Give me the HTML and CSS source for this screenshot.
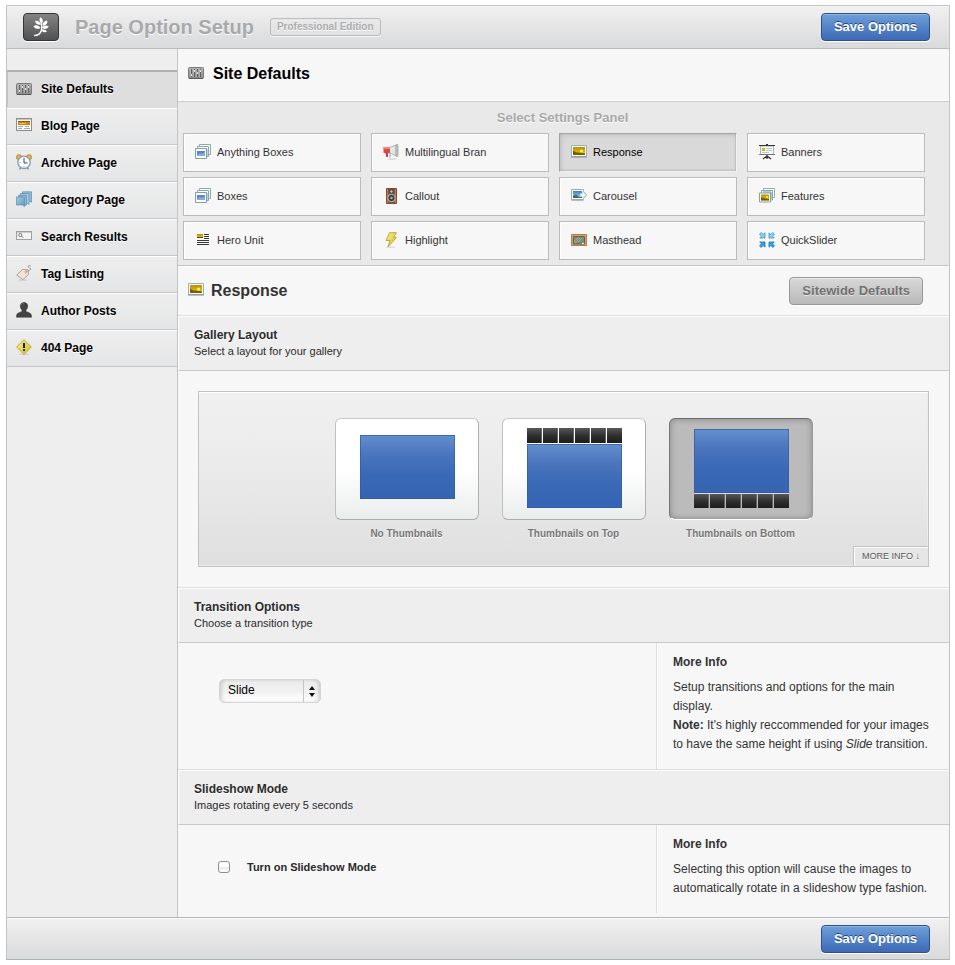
FILE: index.html
```html
<!DOCTYPE html>
<html lang="en">
<head>
<meta charset="utf-8">
<meta name="viewport" content="width=device-width, initial-scale=1">
<title>Page Option Setup</title>
<link rel="stylesheet" href="styles.css">
</head>
<body>
<svg class="sprite" width="0" height="0" aria-hidden="true">
  <defs>
    <linearGradient id="g-gold" x1="0" y1="0" x2="0" y2="1"><stop offset="0" stop-color="#b8900c"/><stop offset="1" stop-color="#e8c800"/></linearGradient>
    <linearGradient id="g-sky" x1="0" y1="0" x2="0" y2="1"><stop offset="0" stop-color="#3d78d0"/><stop offset="1" stop-color="#b4d4f2"/></linearGradient>
    <linearGradient id="g-metal" x1="0" y1="0" x2="0" y2="1"><stop offset="0" stop-color="#b4b4b4"/><stop offset="1" stop-color="#8c8c8c"/></linearGradient>
    <linearGradient id="g-screen" x1="0" y1="0" x2="0" y2="1"><stop offset="0" stop-color="#648fce"/><stop offset=".3" stop-color="#4b75bd"/><stop offset=".65" stop-color="#3868b6"/><stop offset="1" stop-color="#3565b2"/></linearGradient>
    <linearGradient id="g-thumb" x1="0" y1="0" x2="0" y2="1"><stop offset="0" stop-color="#58585a"/><stop offset=".5" stop-color="#303031"/><stop offset="1" stop-color="#1d1c1d"/></linearGradient>
    <linearGradient id="g-sheet" x1="0" y1="0" x2="1" y2="1"><stop offset="0" stop-color="#a5cde4"/><stop offset="1" stop-color="#6096ba"/></linearGradient>
    <linearGradient id="g-yellow" x1="0" y1="0" x2="1" y2="1"><stop offset="0" stop-color="#f4f09a"/><stop offset="1" stop-color="#d2bd17"/></linearGradient>
  </defs>
  <symbol id="i-mixer" viewBox="0 0 16 16">
    <rect x=".5" y="2.500" width="15" height="11" rx="1" fill="url(#g-metal)" stroke="#7c7c7c"/>
    <path d="M1 13.500h14" stroke="#555"/>
    <path d="M3.500 4v8M6.500 4v8M9.500 4v8M12.500 4v8" stroke="#606060"/>
    <path d="M3.500 9v2M6.500 5v2M9.500 7v2M12.500 5v2" stroke="#e2e2e2"/>
    <path d="M2.500 4v8M5.500 4v8M8.500 4v8M11.500 4v8" stroke="#c6c6c6" stroke-width=".4"/>
  </symbol>
  <symbol id="i-blog" viewBox="0 0 16 16">
    <rect x=".5" y="1.500" width="15" height="12" fill="#f6f6f6" stroke="#8e8e8e"/>
    <path d="M1 2.500h14" stroke="#c4c8cc"/>
    <rect x="2" y="4" width="12" height="4" fill="#c8860f"/><path d="M2 4.500h12" stroke="#9c5a05"/><path d="M3 6.500h7" stroke="#eac06a"/>
    <path d="M2 9.500h5M2 11.500h4M9 9.500h4M8 11.500h6" stroke="#aaa"/>
  </symbol>
  <symbol id="i-clock" viewBox="0 0 16 16">
    <circle cx="3" cy="3.200" r="2.600" fill="#e9b54c" stroke="#a97924" stroke-width=".7"/><circle cx="13" cy="3.200" r="2.600" fill="#e9b54c" stroke="#a97924" stroke-width=".7"/>
    <path d="M3.500 15.500l2-3M12.500 15.500l-2-3" stroke="#777" stroke-width="1.200"/>
    <circle cx="8" cy="8.300" r="6.200" fill="#fbfcfe" stroke="#7f9cb8" stroke-width="1.300"/>
    <path d="M8 4v5h3.500" fill="none" stroke="#444"/><path d="M8 12v1.500M3.500 8.500H5" stroke="#999" stroke-width=".7"/>
  </symbol>
  <symbol id="i-sheets" viewBox="0 0 16 16" stroke="#5d8dad" stroke-width=".7">
    <path d="M6.500.8h9v10.500l-1.500-1H6.500z" fill="#90bdd8"/><path d="M4.500 2.500h8.500v11l-1.500-1H4.500z" fill="#a5cce2"/>
    <path d="M2.500 4.300h8V14l-2 .5-1-1h-5z" fill="#8dbcd8"/><path d="M.5 6h8v9.500l-2-1.500h-6z" fill="url(#g-sheet)"/>
  </symbol>
  <symbol id="i-search" viewBox="0 0 16 16">
    <rect x=".5" y="3.500" width="15" height="8" fill="#f4f4f4" stroke="#a0a0a0"/><path d="M1 4.500h14" stroke="#cdcdcd"/>
    <circle cx="4.300" cy="7" r="1.600" fill="#fff" stroke="#777"/><path d="M5.500 8.200l1.700 1.700" stroke="#777"/>
  </symbol>
  <symbol id="i-tag" viewBox="0 0 16 16">
    <ellipse cx="7" cy="15" rx="5" ry=".7" fill="#ccc"/>
    <path d="M.8 10l5.700-5.500 5.500.2.500 4.800-5.700 5.200z" fill="#f0e4da" stroke="#b09888" stroke-width=".9" stroke-linejoin="round"/>
    <circle cx="9.800" cy="6.800" r="1" fill="#fff" stroke="#a98e7e" stroke-width=".7"/>
    <path d="M10 6.300c2-.2 4.800-.8 4.800-2.300S12 3.200 12 1.800 13.500.4 15 1" fill="none" stroke="#a4988e" stroke-width=".9"/>
  </symbol>
  <symbol id="i-user" viewBox="0 0 16 16">
    <path d="M8 .5c2.300 0 3.700 1.500 3.700 3.500 0 1.700-.7 3-1.700 3.900v1.600l4 1.700c1.200.6 1.500 2 1.500 4H.5c0-2 .3-3.400 1.500-4l4-1.700V7.900C5 7 4.300 5.700 4.300 4 4.300 2 5.700.5 8 .5z" fill="#444" stroke="#2d2d2d" stroke-width=".5"/>
    <path d="M5.500 3C6 1.700 7 1.200 8 1.200" stroke="#777" fill="none"/>
  </symbol>
  <symbol id="i-warn" viewBox="0 0 16 16">
    <ellipse cx="8" cy="15.300" rx="5" ry=".7" fill="#ccc"/>
    <path d="M8 .6L15.400 8 8 15.400.6 8z" fill="url(#g-yellow)" stroke="#bfa93a" stroke-linejoin="round"/>
    <path d="M8 4v5M8 10.300v1.700" stroke="#222" stroke-width="2"/>
  </symbol>
  <symbol id="i-boxes" viewBox="0 0 16 16">
    <path d="M4.500.5h11v10h-11z" fill="#fff" stroke="#89a8a8"/><path d="M6 2.500h7.500v7" fill="none" stroke="#c8dae8"/>
    <path d="M2.500 2.500h11v10h-11z" fill="#fff" stroke="#89a8a8"/><path d="M12 5v7" stroke="#7ea4d8"/>
    <path d="M.5 4.500h11v10H.5z" fill="#fff" stroke="#7f9fa0"/><path d="M2 7h8v5H2z" fill="#5c84cc"/><path d="M2 11l3-2 2 1 3-2v4H2z" fill="#89abe0"/>
  </symbol>
  <symbol id="i-horn" viewBox="0 0 16 16">
    <ellipse cx="9" cy="15" rx="5" ry=".7" fill="#d5d5d5"/>
    <path d="M6 3.500L13.500 1v11L6 8.500z" fill="#e6e6e6" stroke="#a5a5a5" stroke-width=".8"/>
    <rect x="12.800" y=".5" width="2.200" height="12" rx="1" fill="#c4c4c4" stroke="#8f8f8f" stroke-width=".6"/>
    <path d="M.5 3h6.500v6H.5z" fill="#df4545"/><path d="M.5 3h6.500v2H.5z" fill="#f08585"/><path d="M2.500 9H5v4H3.200z" fill="#b84548"/>
    <path d="M7 9v4.500" stroke="#999"/>
  </symbol>
  <symbol id="i-picture" viewBox="0 0 16 16">
    <path d="M.5 1.500h15v11H.5z" fill="#fff" stroke="#94b2b6"/><path d="M0 13h16" stroke="#778f94"/>
    <path d="M2 3h12v8H2z" fill="url(#g-gold)"/><path d="M2 6.500l3 1.700 4 .6 5 .7V11H2z" fill="#7c5a0c"/><circle cx="10.500" cy="7" r="1.500" fill="#fff27b"/>
  </symbol>
  <symbol id="i-board" viewBox="0 0 16 16">
    <path d="M7 0h2v2H7z" fill="#333"/><path d="M1.500 2h13v8.500h-13z" fill="#f5f8f8" stroke="#aab4b4"/><path d="M0 1.500h16" stroke="#333"/>
    <path d="M0 10.500h16" stroke="#777"/><path d="M3 4h3v3H3z" fill="#dcb41a"/><path d="M7 4.500h6M7 6.500h6M3 8.500h7" stroke="#b5d0c8"/>
    <path d="M8 11v4M8 12l-4 3M8 12l4 3" stroke="#333" stroke-width="1.200"/>
  </symbol>
  <symbol id="i-speaker" viewBox="0 0 16 16">
    <path d="M3.500.5h10v15h-10z" fill="#c17d52" stroke="#85492b"/><path d="M5 1h7v14H5z" fill="#6e5c50"/>
    <circle cx="8.500" cy="3.500" r="1.700" fill="#d3d3d3" stroke="#333"/><circle cx="8.500" cy="10" r="3.700" fill="#3a3a3a" stroke="#c4c4c4"/><circle cx="8.500" cy="10" r="1.300" fill="#b0b0b0"/>
  </symbol>
  <symbol id="i-carousel" viewBox="0 0 16 16">
    <path d="M.5 1.500h12v2l3 3.500-3 3.500v1H.5z" fill="#fff" stroke="#94aeb4"/>
    <path d="M2 3h9v2.500L12.500 7 11 8.500V10H2z" fill="url(#g-sky)"/><path d="M2 8l3-1.500L8 9h3v1H2z" fill="#3f7050"/>
    <path d="M9.500 5.500h2V4l3 3-3 3V8.500h-2z" fill="#fff" stroke="#b5c8cc" stroke-width=".6"/><path d="M.5 12.500h12" stroke="#b0bec2"/>
  </symbol>
  <symbol id="i-gallery" viewBox="0 0 16 16">
    <path d="M4.500.5h11v9h-11z" fill="#fff" stroke="#9cad98"/><path d="M6 2.500h7.500V9" fill="none" stroke="#b9a32b"/>
    <path d="M2.500 2.500h11v9.500h-11z" fill="#fff" stroke="#87a4a8"/><path d="M4 4h8V11" fill="none" stroke="#5797cd"/>
    <path d="M.5 5h11v9H.5z" fill="#fff" stroke="#87a398"/><path d="M2 6.500h8v6H2z" fill="url(#g-gold)"/><path d="M2 9.500l8 1.500v1.500H2z" fill="#785810"/><circle cx="8" cy="9" r="1" fill="#fff06e"/>
  </symbol>
  <symbol id="i-hero" viewBox="0 0 16 16">
    <path d="M2 2h6v4H2z" fill="url(#g-gold)"/><path d="M2 5.500h6" stroke="#5c430a"/>
    <path d="M9 2.500h5M9 4.500h5M9 6.500h5M2 8.500h12M2 10.500h12M2 12.500h12" stroke="#383838"/>
  </symbol>
  <symbol id="i-bolt" viewBox="0 0 16 16">
    <ellipse cx="8" cy="15.200" rx="5" ry=".6" fill="#d8d8d8"/>
    <path d="M6.500.7h7l-3 4.600h3L5 15l2-6.500H3z" fill="url(#g-yellow)" stroke="#c2aa38" stroke-linejoin="round"/>
  </symbol>
  <symbol id="i-masthead" viewBox="0 0 16 16">
    <path d="M.5 2.500h15v11H.5z" fill="#dca06a" stroke="#b47a50"/><path d="M2.500 4.500h11v7.500h-11z" fill="#7f8c7a" stroke="#5c6655"/>
    <path d="M3 10l5-5M4 11l5-5M7 10l4-4" stroke="#aab2a4" stroke-width=".7"/><path d="M11 11.500h2" stroke="#fff"/>
  </symbol>
  <symbol id="i-arrows" viewBox="0 0 16 16" stroke-width=".8" stroke-linejoin="round">
    <path id="arrow-in" d="M.5 2.200L2.200.5l2 2L6 .8V6H.8l1.700-1.800z" fill="#8fd0f5" stroke="#3a8ec4"/>
    <use href="#arrow-in" transform="matrix(-1 0 0 1 16 0)"/>
    <path id="arrow-up" d="M.5 13.800l1.700 1.700 2-2L6 15.200V10H.8l1.700 1.800z" fill="#35a3e8" stroke="#1671b4"/>
    <use href="#arrow-up" transform="matrix(-1 0 0 1 16 0)"/>
  </symbol>
  <symbol id="screen" viewBox="0 0 95 64">
    <rect width="95" height="64" fill="url(#g-screen)"/><path d="M.5 64V.5H95" fill="none" stroke="#2f5d9e" stroke-opacity=".75"/><path d="M0 63.500h94.500V0" fill="none" stroke="#2f5caa" stroke-opacity=".6"/>
  </symbol>
  <symbol id="thumbs" viewBox="0 0 95 15" preserveAspectRatio="none">
    <path d="M0 0h15v15H0zM16 0h15v15H16zM32 0h15v15H32zM48 0h15v15H48zM64 0h15v15H64zM80 0h15v15H80z" fill="url(#g-thumb)"/>
    <path d="M14.500 0v15M30.500 0v15M46.500 0v15M62.500 0v15M78.500 0v15" stroke="#777" stroke-opacity=".7"/>
  </symbol>
</svg>

<form class="panel">
  <header class="bar bar--top">
    <a class="logo" href="#" aria-label="Home">
      <svg width="18" height="20" viewBox="0 0 18 20" fill="#fff">
        <path d="M8.200.3c2.600 1.200 3.300 3.500 1.900 6.200C7.300 5.300 6.700 2.900 8.200.3z"/>
        <path d="M3 3.800c3-.4 5 .8 5.900 4C5.600 8.200 3.500 6.900 3 3.800z"/>
        <path d="M15.300 3.600c.5 3-1 4.900-4.500 5.200-.1-3.200 1.400-5 4.500-5.200z"/>
        <path d="M1.500 9.200c2.500-1.600 5.200-1 7 1.700-2.600 1.600-5.200 1.100-7-1.700z"/>
        <path d="M16.800 9.600c-1.600 2.500-3.900 3.100-6.700 1.300 1.500-2.600 4-3.100 6.700-1.300z"/>
        <path d="M15 14.600c-2 1.300-4 .9-5.600-1.400 2-1.400 4-1 5.600 1.400z"/>
        <path d="M9 4c1 4.500 1.100 7.500.2 10-.9 2.600-3 4.400-7 4.600" fill="none" stroke="#fff" stroke-width="1.500"/>
      </svg>
    </a>
    <h1 class="bar__title">Page Option Setup</h1>
    <span class="badge">Professional Edition</span>
    <button class="button button--primary" type="button">Save Options</button>
  </header>

  <div class="layout">
    <nav class="sidebar">
      <a class="sidebar__item sidebar__item--active" href="#"><svg class="icon"><use href="#i-mixer"/></svg>Site Defaults</a>
      <a class="sidebar__item" href="#"><svg class="icon"><use href="#i-blog"/></svg>Blog Page</a>
      <a class="sidebar__item" href="#"><svg class="icon"><use href="#i-clock"/></svg>Archive Page</a>
      <a class="sidebar__item" href="#"><svg class="icon"><use href="#i-sheets"/></svg>Category Page</a>
      <a class="sidebar__item" href="#"><svg class="icon"><use href="#i-search"/></svg>Search Results</a>
      <a class="sidebar__item" href="#"><svg class="icon"><use href="#i-tag"/></svg>Tag Listing</a>
      <a class="sidebar__item" href="#"><svg class="icon"><use href="#i-user"/></svg>Author Posts</a>
      <a class="sidebar__item" href="#"><svg class="icon"><use href="#i-warn"/></svg>404 Page</a>
    </nav>

    <main class="content">
      <div class="heading heading--page">
        <svg class="icon"><use href="#i-mixer"/></svg>
        <h2 class="heading__text">Site Defaults</h2>
      </div>

      <section class="chooser">
        <h3 class="chooser__title">Select Settings Panel</h3>
        <div class="chooser__grid">
          <a class="tile" href="#"><svg class="icon"><use href="#i-boxes"/></svg>Anything Boxes</a>
          <a class="tile" href="#"><svg class="icon"><use href="#i-horn"/></svg>Multilingual Bran</a>
          <a class="tile tile--active" href="#"><svg class="icon"><use href="#i-picture"/></svg>Response</a>
          <a class="tile" href="#"><svg class="icon"><use href="#i-board"/></svg>Banners</a>
          <a class="tile" href="#"><svg class="icon"><use href="#i-boxes"/></svg>Boxes</a>
          <a class="tile" href="#"><svg class="icon"><use href="#i-speaker"/></svg>Callout</a>
          <a class="tile" href="#"><svg class="icon"><use href="#i-carousel"/></svg>Carousel</a>
          <a class="tile" href="#"><svg class="icon"><use href="#i-gallery"/></svg>Features</a>
          <a class="tile" href="#"><svg class="icon"><use href="#i-hero"/></svg>Hero Unit</a>
          <a class="tile" href="#"><svg class="icon"><use href="#i-bolt"/></svg>Highlight</a>
          <a class="tile" href="#"><svg class="icon"><use href="#i-masthead"/></svg>Masthead</a>
          <a class="tile" href="#"><svg class="icon"><use href="#i-arrows"/></svg>QuickSlider</a>
        </div>
      </section>

      <div class="heading heading--section">
        <svg class="icon"><use href="#i-picture"/></svg>
        <h2 class="heading__text">Response</h2>
        <button class="button button--muted" type="button">Sitewide Defaults</button>
      </div>

      <section>
        <div class="option-head">
          <h3 class="option-head__title">Gallery Layout</h3>
          <p class="option-head__hint">Select a layout for your gallery</p>
        </div>
        <div class="gallery">
          <div class="gallery__box">
            <label class="choice">
              <input class="choice__input" type="radio" name="layout">
              <span class="choice__card"><svg width="95" height="80" viewBox="0 0 95 80"><use href="#screen" y="6" width="95" height="64"/></svg></span>
              <span class="choice__label">No Thumbnails</span>
            </label>
            <label class="choice">
              <input class="choice__input" type="radio" name="layout">
              <span class="choice__card"><svg width="95" height="80" viewBox="0 0 95 80"><use href="#thumbs" y="-1" width="95" height="15"/><use href="#screen" y="15" width="95" height="64"/></svg></span>
              <span class="choice__label">Thumbnails on Top</span>
            </label>
            <label class="choice">
              <input class="choice__input" type="radio" name="layout" checked>
              <span class="choice__card"><svg width="95" height="80" viewBox="0 0 95 80"><use href="#screen" width="95" height="64"/><path d="M0 64.500h95" stroke="#ddd"/><use href="#thumbs" y="65" width="95" height="14"/></svg></span>
              <span class="choice__label">Thumbnails on Bottom</span>
            </label>
            <a class="more-info" href="#">MORE INFO ↓</a>
          </div>
        </div>
      </section>

      <section>
        <div class="option-head">
          <h3 class="option-head__title"><label for="transition">Transition Options</label></h3>
          <p class="option-head__hint">Choose a transition type</p>
        </div>
        <div class="option">
          <div class="option__field">
            <div class="select">
              <select class="select__control" id="transition"><option>Slide</option><option>Fade</option></select>
              <svg class="select__arrows" width="18" height="22" viewBox="0 0 18 22"><path d="M.5 0v22" stroke="#c4c4c4"/><path d="M9 6l3 4H6zM6 13h6l-3 4z" fill="#111"/></svg>
            </div>
          </div>
          <aside class="option__info">
            <h4 class="option__info-title">More Info</h4>
            <p class="option__info-text">Setup transitions and options for the main display.<br><strong>Note:</strong> It's highly reccommended for your images to have the same height if using <em>Slide</em> transition.</p>
          </aside>
        </div>
      </section>

      <section>
        <div class="option-head">
          <h3 class="option-head__title">Slideshow Mode</h3>
          <p class="option-head__hint">Images rotating every 5 seconds</p>
        </div>
        <div class="option option--last">
          <div class="option__field">
            <label class="check"><input class="check__box" type="checkbox">Turn on Slideshow Mode</label>
          </div>
          <aside class="option__info">
            <h4 class="option__info-title">More Info</h4>
            <p class="option__info-text">Selecting this option will cause the images to automatically rotate in a slideshow type fashion.</p>
          </aside>
        </div>
      </section>
    </main>
  </div>

  <footer class="bar bar--bottom">
    <button class="button button--primary" type="button">Save Options</button>
  </footer>
</form>
</body>
</html>
```
FILE: styles.css
```css
* { box-sizing: border-box; }

body {
  margin: 5px 5px 5px 6px;
  background: #fff;
  color: #333;
  font: 12px/19px "Liberation Sans", Arial, sans-serif;
}

h1, h2, h3, h4, p { margin: 0; }
a { color: inherit; text-decoration: none; }

.sprite { position: absolute; }
.icon { width: 16px; height: 16px; margin-bottom: 2px; flex: none; }

.panel {
  border: 1px solid #c3c4c5;
  border-bottom-color: #b0b1b2;
  background: #f7f7f7;
  box-shadow: 0 1px 5px rgba(0, 0, 0, .22);
}

/* Top and bottom bars */
.bar {
  display: flex;
  align-items: center;
  padding: 0 19px 0 16px;
  background: linear-gradient(#f1f1f1, #e5e5e6 50%, #d9dadc);
}
.bar--top { height: 43px; border-bottom: 1px solid #b9babb; box-shadow: inset 0 1px #f4f4f4; }
.bar--bottom { height: 42px; border-top: 1px solid #b5b7b8; box-shadow: inset 0 1px #fafafa; }

.logo {
  display: flex;
  align-items: center;
  justify-content: center;
  width: 36px;
  height: 28px;
  border: 1px solid #353535;
  border-radius: 4px;
  background: linear-gradient(#838384, #515152);
  box-shadow: 0 1px #fff;
}
.bar__title {
  margin: 0 16px;
  color: #a8a9aa;
  font-size: 20px;
  line-height: 24px;
  text-shadow: 0 1px #fff;
}
.badge {
  padding: 0 6px;
  border: 1px solid #b9babb;
  border-radius: 3px;
  color: #abacad;
  font-size: 10px;
  line-height: 16px;
  font-weight: bold;
  text-shadow: 0 1px #fff;
  box-shadow: 0 1px #f8f8f8;
}

.button {
  height: 28px;
  margin-left: auto;
  padding: 0 12px;
  border-radius: 4px;
  font: bold 13px/26px "Liberation Sans", Arial, sans-serif;
}
.button--primary {
  border: 1px solid #2e5086;
  background: linear-gradient(#6da0d8, #3d69b8);
  color: #fff;
  text-shadow: 0 -1px rgba(0, 0, 50, .55);
  box-shadow: inset 0 1px rgba(255, 255, 255, .25), 0 1px #fff;
}
.button--muted {
  border: 1px solid #969696;
  background: linear-gradient(#d8d8d8, #b9b9b9);
  color: #717171;
  text-shadow: 0 1px #e2e2e2;
  box-shadow: inset 0 1px #e8e8e8, 0 1px #fff;
}

/* Sidebar */
.layout { display: flex; }
.sidebar {
  flex: none;
  width: 171px;
  padding-top: 21px;
  border-right: 1px solid #c3c3c3;
  background: #eee;
}
.sidebar__item {
  display: flex;
  align-items: center;
  gap: 9px;
  height: 37px;
  padding: 0 9px;
  border-bottom: 1px solid #c5c6c7;
  background: linear-gradient(#eee, #e4e5e6);
  box-shadow: inset 0 1px #fff;
  color: #000;
  font-weight: bold;
  text-shadow: 0 1px #fff;
}
.sidebar__item--active {
  height: 38px;
  border-top: 2px solid #b0b0b0;
  border-bottom-color: #ddd;
  background: #dedede;
  box-shadow: inset 1px 0 #c2c2c2;
}

/* Content headings */
.content { flex: 1; min-width: 0; }
.heading {
  display: flex;
  align-items: center;
  padding: 0 26px 0 10px;
  border-bottom: 1px solid #ccc;
  box-shadow: inset 0 -1px #fff;
}
.heading--page { gap: 9px; height: 53px; padding-bottom: 3px; color: #000; }
.heading--section { gap: 7px; height: 50px; border-color: #ddd; box-shadow: inset 0 1px #fff; }
.heading__text { font-size: 16px; line-height: 20px; }

/* Settings panel chooser */
.chooser {
  padding: 8px 24px 5px 5px;
  border-bottom: 1px solid #c5c5c5;
  background: #e9e9e9;
}
.chooser__title {
  margin: 0 -17px 7px 0;
  color: #a8a8a8;
  font-size: 13px;
  line-height: 16px;
  text-align: center;
  text-shadow: 0 1px #fff;
}
.chooser__grid {
  display: grid;
  grid-template-columns: repeat(4, 1fr);
  gap: 5px 10px;
}
.tile {
  display: flex;
  align-items: center;
  gap: 6px;
  height: 39px;
  padding: 0 11px;
  border: 1px solid #bbb;
  background: #f7f7f7;
  box-shadow: inset 1px 1px #fff;
  font-size: 11px;
}
.tile--active {
  border-color: #a2a2a2 #f3f3f3 #f3f3f3 #a2a2a2;
  background: #d9d9d9;
  box-shadow: inset 1px 1px 4px rgba(0, 0, 0, .15), inset -1px -1px #c8c8c8;
  color: #000;
}

/* Option groups */
.option-head {
  height: 55px;
  padding: 10px 15px 0;
  border: solid;
  border-width: 1px 0 1px 1px;
  border-color: #fff #fff #c8c8c8;
  background: #eee;
  color: #2b2b2b;
}
.option-head__title { font-size: 12px; line-height: 16px; text-shadow: 0 1px #fff; }
.option-head__hint { font-size: 11px; line-height: 16px; }

.gallery { padding: 20px; border-bottom: 1px solid #ddd; }
.gallery__box {
  position: relative;
  display: flex;
  justify-content: center;
  gap: 23px;
  height: 176px;
  padding: 26px 0 0 20px;
  border: 1px solid #c2c2c2;
  background: linear-gradient(#f0f0f0, #ececec 35%, #dfdfdf);
  box-shadow: inset 0 1px #fff, inset -1px -1px #ececec;
}
.choice { width: 144px; text-align: center; }
.choice__input { position: absolute; opacity: 0; }
.choice__card {
  display: flex;
  height: 102px;
  padding: 10px 0 0 24px;
  border: 1px solid #b9b9b9;
  border-color: #c8c8c8 #b0b0b0 #aaa #c0c0c0;
  border-radius: 6px;
  background: linear-gradient(#fff 50%, #ebecec);
}
.choice__card svg { overflow: visible; }
.choice__input:checked + .choice__card {
  border-color: #6c6c6c #999 #fff #777;
  background: #bbb;
  box-shadow: inset 0 0 6px rgba(0, 0, 0, .3);
}
.choice__label {
  display: block;
  padding-top: 5px;
  color: #777;
  font-size: 10px;
  line-height: 18px;
  font-weight: bold;
  text-shadow: 0 1px #fff;
}
.more-info {
  position: absolute;
  right: 0;
  bottom: 0;
  padding: 0 8px;
  border: solid #c2c2c2;
  border-width: 1px 0 0 1px;
  background: #e6e6e6;
  box-shadow: inset 1px 1px #fff;
  color: #555;
  font-size: 9px;
  line-height: 19px;
  text-shadow: 0 1px #fff;
}

.option { display: flex; border-bottom: 1px solid #ddd; }
.option--last { padding-bottom: 4px; border-bottom: 0; }
.option__field { flex: 1; padding: 36px 40px; }
.option__info {
  width: 38%;
  padding: 10px 12px 15px 16px;
  border-left: 1px solid #ddd;
  box-shadow: inset 1px 0 #fff;
}
.option__info-title { margin-bottom: 6px; font-size: 12px; }

.select { position: relative; display: inline-flex; margin-left: 1px; }
.select__control {
  appearance: none;
  width: 102px;
  height: 24px;
  padding: 0 24px 2px 8px;
  border: 1px solid #d5d5d5;
  border-radius: 5px;
  background: linear-gradient(#eaeaea, #f1f1f1 50%, #fff);
  box-shadow: inset 3px 0 4px -2px rgba(0, 0, 0, .2), inset -3px 0 4px -2px rgba(0, 0, 0, .2);
  color: #000;
  font: 12px "Liberation Sans", Arial, sans-serif;
}
.select__arrows { position: absolute; top: 1px; right: 0; pointer-events: none; }

.check {
  display: flex;
  align-items: center;
  gap: 17px;
  color: #2b2b2b;
  font-size: 11px;
  line-height: 12px;
  font-weight: bold;
}
.check__box {
  appearance: none;
  width: 12px;
  height: 12px;
  margin: 0;
  border: 1px solid #8f8f8f;
  border-radius: 3px;
  background: linear-gradient(#fff 45%, #e9e9e9 55%, #fff);
}
```
